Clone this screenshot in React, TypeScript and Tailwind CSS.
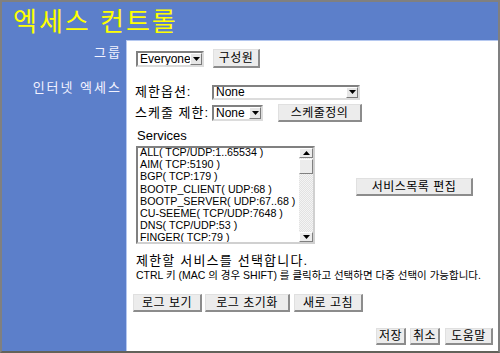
import React from "react";

const font = { fontFamily: '"Liberation Sans", "Noto Sans CJK KR", sans-serif' };

const Arrow = ({ up = false }: { up?: boolean }) => (
  <svg width="7" height="4" viewBox="0 0 7 4" className={up ? "rotate-180" : ""}>
    <path d="M0 0h7L3.5 4z" fill="#000" />
  </svg>
);

const Select = ({ value, className }: { value: string; className: string }) => (
  <div
    className={`flex shrink-0 items-stretch bg-white border-2 border-t-[#808080] border-l-[#808080] border-r-[#dcdcdc] border-b-[#dcdcdc] ${className}`}
  >
    <div className="flex-1 pl-[2px] text-[12px] leading-[12px] text-black flex items-center overflow-hidden">{value}</div>
    <div className="w-[12px] bg-[#e6e6e6] border border-t-white border-l-white border-r-[#7a7a7a] border-b-[#7a7a7a] flex items-center justify-center">
      <Arrow />
    </div>
  </div>
);

const Btn = ({ label, className }: { label: string; className: string }) => (
  <button
    className={`flex shrink-0 items-center justify-center overflow-hidden bg-[#ececec] border border-t-[#e0e0e0] border-l-[#e0e0e0] border-r-2 border-b-2 border-r-[#8c8c8c] border-b-[#8c8c8c] text-[12px] leading-[12px] tracking-[0.5px] text-black ${className}`}
  >
    {label}
  </button>
);

const services = [
  "ALL( TCP/UDP:1..65534 )",
  "AIM( TCP:5190 )",
  "BGP( TCP:179 )",
  "BOOTP_CLIENT( UDP:68 )",
  "BOOTP_SERVER( UDP:67..68 )",
  "CU-SEEME( TCP/UDP:7648 )",
  "DNS( TCP/UDP:53 )",
  "FINGER( TCP:79 )",
];

export default function App() {
  return (
    <div
      style={font}
      className="w-[500px] h-[353px] flex flex-col bg-[#5c7fca] border-2 border-[#808080] border-b-[#62625a] overflow-hidden"
    >
      <div className="shrink-0 h-[38px] pl-[11px] pt-[4px] text-[26px] leading-[32px] tracking-[2px] text-[#ffff00]">
        엑세스 컨트롤
      </div>
      <div className="flex flex-1 min-h-0">
        <div className="shrink-0 w-[124px] pr-[4px] pt-[6px] text-right text-[13px] leading-[14px] tracking-[2px] text-[#f2f2ff]">
          <div className="h-[14px]">그룹</div>
          <div className="h-[14px] mt-[21px]">인터넷 엑세스</div>
        </div>
        <div className="flex-1 flex flex-col bg-white border-t border-l border-[#b5c8f0] pl-[6px] pr-[5px] pt-[8px] text-black">
          <div className="flex items-center h-[19px] pl-[3px]">
            <Select value="Everyone" className="w-[68px] h-[16px]" />
            <Btn label="구성원" className="ml-[9px] w-[47px] h-[19px]" />
          </div>
          <div className="flex items-center h-[16px] mt-[16px] pl-[2px]">
            <div className="w-[77px] h-[14px] text-[13px] leading-[14px] tracking-[1px] whitespace-nowrap">제한옵션:</div>
            <Select value="None" className="w-[148px] h-[15px]" />
          </div>
          <div className="flex items-center h-[18px] mt-[4px] pl-[2px]">
            <div className="w-[77px] h-[14px] text-[13px] leading-[14px] tracking-[1px] whitespace-nowrap">스케줄 제한:</div>
            <Select value="None" className="w-[51px] h-[16px]" />
            <Btn label="스케줄정의" className="ml-[15px] w-[84px] h-[18px]" />
          </div>
          <div className="h-[15px] mt-[6px] pl-[4px] text-[13px] leading-[15px]">Services</div>
          <div className="flex items-start mt-[3px] pl-[3px]">
            <div className="flex shrink-0 w-[179px] h-[98px] border-2 border-t-[#808080] border-l-[#808080] border-r-[#d0d0d0] border-b-[#d0d0d0] bg-white overflow-hidden">
              <div className="flex-1 pl-[2px] -mt-[2px] text-[10.7px] leading-[12.2px] whitespace-nowrap overflow-hidden">
                {services.map((s) => (
                  <div key={s} className="h-[12.2px]">{s}</div>
                ))}
              </div>
              <div className="w-[14px] flex flex-col bg-[repeating-conic-gradient(#f4f4f4_0_25%,#e2e2e2_0_50%)] bg-[length:2px_2px]">
                <div className="h-[10px] bg-[#ececec] border border-t-white border-l-white border-r-[#808080] border-b-[#808080] flex items-center justify-center">
                  <Arrow up />
                </div>
                <div className="mt-[1px] h-[15px] bg-[#ececec] border border-t-white border-l-white border-r-[#808080] border-b-[#808080]" />
                <div className="flex-1" />
                <div className="h-[10px] bg-[#ececec] border border-t-white border-l-white border-r-[#808080] border-b-[#808080] flex items-center justify-center">
                  <Arrow />
                </div>
              </div>
            </div>
            <Btn label="서비스목록 편집" className="ml-[41px] mt-[32px] w-[117px] h-[18px]" />
          </div>
          <div className="h-[16px] mt-[9px] pl-[3px] text-[13px] leading-[16px] tracking-[1.2px] whitespace-nowrap">
            제한할 서비스를 선택합니다.
          </div>
          <div className="h-[13px] pl-[3px] text-[10.5px] leading-[13px] whitespace-nowrap">
            CTRL 키 (MAC 의 경우 SHIFT) 를 클릭하고 선택하면 다중 선택이 가능합니다.
          </div>
          <div className="flex mt-[12px]">
            <Btn label="로그 보기" className="w-[69px] h-[18px]" />
            <Btn label="로그 초기화" className="ml-[3px] w-[85px] h-[18px]" />
            <Btn label="새로 고침" className="ml-[4px] w-[69px] h-[18px]" />
          </div>
          <div className="flex justify-end mt-[16px]">
            <Btn label="저장" className="w-[30px] h-[17px]" />
            <Btn label="취소" className="ml-[4px] w-[30px] h-[17px]" />
            <Btn label="도움말" className="ml-[5px] w-[48px] h-[17px]" />
          </div>
        </div>
      </div>
    </div>
  );
}
